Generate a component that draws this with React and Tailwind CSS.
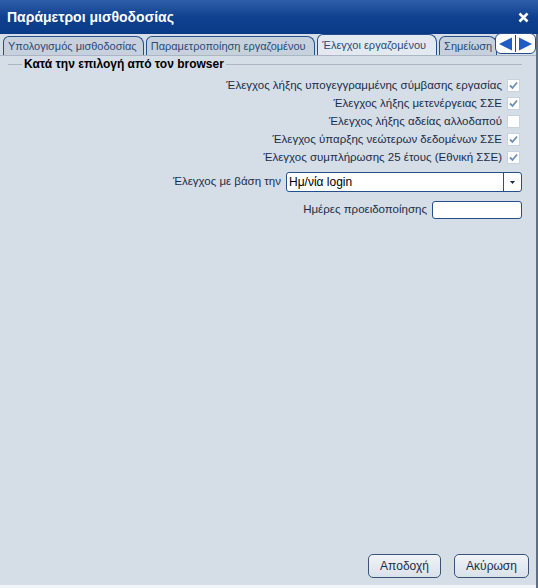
import React from "react";

const font = { fontFamily: '"Liberation Sans", Arial, sans-serif' };

function Check({ checked }) {
  return (
    <span className="w-[13px] h-[13px] bg-white border border-[#c9d3de] flex items-center justify-center shrink-0">
      {checked && (
        <svg width="9" height="9" viewBox="0 0 9 9">
          <path d="M1 4.5 L3.5 7 L8 1.5" fill="none" stroke="#6d8fb3" strokeWidth="1.8" />
        </svg>
      )}
    </span>
  );
}

function Tab({ label, active, w }) {
  return (
    <div
      className={`px-[4px] flex items-center border border-b-0 border-[#254f8c] rounded-tl-[6px] rounded-tr-[8px] text-[11px] text-[#2b4a75] whitespace-nowrap overflow-hidden ${
        active ? "bg-[#e3e9f0] h-[21px]" : "bg-[#c7d1dd] h-[19px]"
      } ${w}`}
    >
      {label}
    </div>
  );
}

const rows = [
  ["Έλεγχος λήξης υπογεγγραμμένης σύμβασης εργασίας", true],
  ["Έλεγχος λήξης μετενέργειας ΣΣΕ", true],
  ["Έλεγχος λήξης αδείας αλλοδαπού", false],
  ["Έλεγχος ύπαρξης νεώτερων δεδομένων ΣΣΕ", true],
  ["Έλεγχος συμπλήρωσης 25 έτους (Εθνική ΣΣΕ)", true],
];

export default function App() {
  return (
    <div className="w-[538px] h-[588px] flex flex-col bg-[#d5dde7]" style={font}>
      <div className="h-[34px] shrink-0 flex items-center justify-between pl-[7px] pr-[9px] bg-gradient-to-b from-[#2f5fa9] via-[#0f4190] to-[#0a3a86]">
        <span className="text-white font-bold text-[14px]">Παράμετροι μισθοδοσίας</span>
        <svg width="11" height="11" viewBox="0 0 11 11">
          <path d="M1.5 1.5 L9.5 9.5 M9.5 1.5 L1.5 9.5" stroke="white" strokeWidth="2.6" />
        </svg>
      </div>
      <div className="flex-1 flex flex-col border-r-2 border-[#5d6f86]">
        <div className="h-[21px] flex items-end pl-[3px] gap-[2px] border-b border-[#aab6c4] mt-[1px] bg-[#d5dde7]">
          <Tab label="Υπολογισμός μισθοδοσίας" w="w-[141px]" />
          <Tab label="Παραμετροποίηση εργαζομένου" w="w-[170px]" />
          <Tab label="Έλεγχοι εργαζομένου" active w="w-[120px]" />
          <Tab label="Σημείωση" w="w-[58px]" />
          <div className="h-[21px] ml-[-4px] flex items-center bg-white border border-[#254f8c] rounded-[6px] px-[2px] gap-[2px] mb-[1px]">
            <svg width="15" height="14" viewBox="0 0 15 14">
              <path d="M1 7 L14 0.5 L14 13.5 Z" fill="#1f5cc4" />
            </svg>
            <span className="w-px h-[17px] bg-[#254f8c]" />
            <svg width="15" height="14" viewBox="0 0 15 14">
              <path d="M14 7 L1 0.5 L1 13.5 Z" fill="#1f5cc4" />
            </svg>
          </div>
        </div>
        <div className="flex-1 flex flex-col pl-[8px] pr-[14px]">
          <div className="flex items-center mt-[-1px]">
            <span className="w-[14px] h-px bg-[#aab6c4]" />
            <span className="px-[2px] text-[12px] font-bold text-black">Κατά την επιλογή από τον browser</span>
            <span className="flex-1 h-px bg-[#aab6c4]" />
          </div>
          <div className="flex flex-col items-end gap-[5px] mt-[6px] pr-[2px]">
            {rows.map(([label, checked]) => (
              <div key={label} className="flex items-center gap-[5px] h-[13px]">
                <span className="text-[11.5px] text-[#1a2d48]">{label}</span>
                <Check checked={checked} />
              </div>
            ))}
          </div>
          <div className="flex items-center justify-end gap-[5px] mt-[8px]">
            <span className="text-[11.5px] text-[#1a2d48]">Έλεγχος με βάση την</span>
            <div className="w-[236px] h-[20px] flex bg-white border border-[#254f8c] rounded-[3px]">
              <span className="flex-1 px-[2px] text-[12px] leading-[18px] text-black">Ημ/νία login</span>
              <span className="w-[18px] border-l border-[#254f8c] flex items-center justify-center">
                <svg width="5" height="3" viewBox="0 0 5 3">
                  <path d="M0 0 L5 0 L2.5 3 Z" fill="#1a2d48" />
                </svg>
              </span>
            </div>
          </div>
          <div className="flex items-center justify-end gap-[5px] mt-[9px]">
            <span className="text-[11.5px] text-[#1a2d48]">Ημέρες προειδοποίησης</span>
            <div className="w-[90px] h-[18px] bg-white border border-[#254f8c] rounded-[3px]" />
          </div>
          <div className="flex-1" />
          <div className="flex justify-end gap-[13px] mb-[7px] mr-[-7px]">
            <button className="w-[73px] h-[24px] rounded-[5px] border border-[#3a5478] bg-gradient-to-b from-[#f1f4f8] to-[#d9e1ea] text-[12px] text-[#1a2d48]">
              Αποδοχή
            </button>
            <button className="w-[75px] h-[24px] rounded-[5px] border border-[#3a5478] bg-gradient-to-b from-[#f1f4f8] to-[#d9e1ea] text-[12px] text-[#1a2d48]">
              Ακύρωση
            </button>
          </div>
        </div>
        <div className="h-[3px] bg-[#f2f6f9]" />
      </div>
    </div>
  );
}
